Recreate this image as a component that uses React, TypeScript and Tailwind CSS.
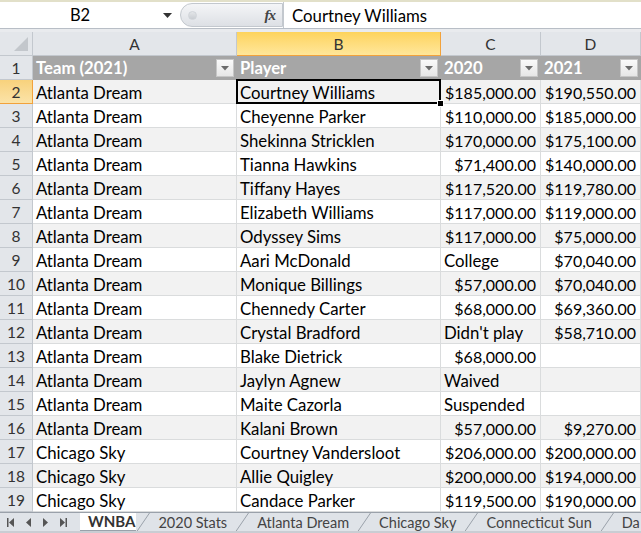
import React from "react";

const ROWS: string[][] = [
  ["Atlanta Dream", "Courtney Williams", "$185,000.00", "$190,550.00"],
  ["Atlanta Dream", "Cheyenne Parker", "$110,000.00", "$185,000.00"],
  ["Atlanta Dream", "Shekinna Stricklen", "$170,000.00", "$175,100.00"],
  ["Atlanta Dream", "Tianna Hawkins", "$71,400.00", "$140,000.00"],
  ["Atlanta Dream", "Tiffany Hayes", "$117,520.00", "$119,780.00"],
  ["Atlanta Dream", "Elizabeth Williams", "$117,000.00", "$119,000.00"],
  ["Atlanta Dream", "Odyssey Sims", "$117,000.00", "$75,000.00"],
  ["Atlanta Dream", "Aari McDonald", "College", "$70,040.00"],
  ["Atlanta Dream", "Monique Billings", "$57,000.00", "$70,040.00"],
  ["Atlanta Dream", "Chennedy Carter", "$68,000.00", "$69,360.00"],
  ["Atlanta Dream", "Crystal Bradford", "Didn't play", "$58,710.00"],
  ["Atlanta Dream", "Blake Dietrick", "$68,000.00", ""],
  ["Atlanta Dream", "Jaylyn Agnew", "Waived", ""],
  ["Atlanta Dream", "Maite Cazorla", "Suspended", ""],
  ["Atlanta Dream", "Kalani Brown", "$57,000.00", "$9,270.00"],
  ["Chicago Sky", "Courtney Vandersloot", "$206,000.00", "$200,000.00"],
  ["Chicago Sky", "Allie Quigley", "$200,000.00", "$194,000.00"],
  ["Chicago Sky", "Candace Parker", "$119,500.00", "$190,000.00"],
];

const WIDTHS = ["w-[204px]", "w-[204px]", "w-[100px]", "w-[100px]"];
const HEADERS = ["Team (2021)", "Player", "2020", "2021"];
const TABS = ["2020 Stats", "Atlanta Dream", "Chicago Sky", "Connecticut Sun", "Da"];

function FilterButton() {
  return (
    <div className="absolute right-[2px] top-[3px] w-[18px] h-[18px] border border-[#c6c6c6] bg-gradient-to-b from-[#fafafa] to-[#e6e6e6] flex items-center justify-center">
      <svg width="8" height="5" viewBox="0 0 8 5">
        <path d="M0 0h8L4 4.5z" fill="#6b6b6b" />
      </svg>
    </div>
  );
}

function Slant() {
  return (
    <svg width="14" height="19" viewBox="0 0 14 19" className="shrink-0">
      <path d="M0.5 19L13.5 0" stroke="#9aa1aa" strokeWidth="1" fill="none" />
    </svg>
  );
}

export default function App() {
  return (
    <div className="w-[641px] h-[533px] overflow-hidden bg-white font-['Lato','Liberation_Sans',sans-serif] text-black select-none">
      {/* formula bar */}
      <div className="h-[2px] bg-[#e2e0c9]" />
      <div className="h-[27px] flex border-b border-[#b8bec6] bg-white">
        <div className="w-[180px] relative flex items-center justify-center pt-[1px] text-[16.5px] pr-[20px]">
          B2
          <svg className="absolute right-[8px] top-[11px]" width="9" height="5" viewBox="0 0 9 5">
            <path d="M0 0h9L4.5 5z" fill="#333" />
          </svg>
        </div>
        <div className="w-[103px] relative flex items-center rounded-l-full border border-[#c3c8ce] bg-gradient-to-b from-[#f4f5f7] to-[#dde0e5] my-[1px]">
          <div className="ml-[7px] w-[9px] h-[9px] rounded-full bg-gradient-to-b from-[#e4e6e9] to-[#c9cdd2] border border-[#d0d4d9]" />
          <span className="ml-auto mr-[7px] font-['Liberation_Serif',serif] italic font-bold text-[15px] text-[#444] tracking-[-1px]">fx</span>
        </div>
        <div className="flex-1 flex items-center pl-[8px] pt-[1px] text-[16.8px] border-l border-[#c3c8ce]">Courtney Williams</div>
      </div>
      <div className="h-[3px] bg-[#e9ebee]" />

      {/* column headers */}
      <div className="flex h-[24px] bg-[#e3e6ea] text-[15.5px] text-[#333]">
        <div className="w-[33px] relative border-r border-b border-[#c3c8ce]">
          <svg className="absolute right-[4px] bottom-[4px]" width="14" height="14" viewBox="0 0 14 14">
            <path d="M14 0V14H0z" fill="#c3c7cc" />
          </svg>
        </div>
        {["A", "B", "C", "D"].map((l, i) =>
          l === "B" ? (
            <div key={l} className={`${WIDTHS[i]} flex items-center justify-center pt-[2px] border-r border-b border-[#f2a23c] bg-gradient-to-b from-[#fdd35b] to-[#ffe79a]`}>
              {l}
            </div>
          ) : (
            <div key={l} className={`${WIDTHS[i]} flex items-center justify-center pt-[2px] border-r border-b border-[#c3c8ce]`}>
              {l}
            </div>
          )
        )}
      </div>

      {/* header row */}
      <div className="flex h-[24px]">
        <div className="w-[33px] flex items-center justify-center pt-[3px] bg-[#e3e6ea] border-r border-b border-[#c3c8ce] text-[15.5px] text-[#333]">1</div>
        {HEADERS.map((h, i) => (
          <div key={h} className={`${WIDTHS[i]} relative flex items-center pl-[3px] pt-[3px] bg-[#a6a6a6] border-r border-b border-[#a6a6a6] text-white font-bold text-[16.7px]`}>
            {h}
            <FilterButton />
          </div>
        ))}
      </div>

      {/* data rows */}
      {ROWS.map((r, ri) => {
        const n = ri + 2;
        const gray = n % 2 === 0;
        const sel = n === 2;
        return (
          <div key={n} className="flex h-[24px]">
            <div
              className={
                sel
                  ? "w-[33px] flex items-center justify-center pt-[3px] bg-gradient-to-b from-[#f8d27c] to-[#fbe3a8] border-r border-b border-[#f2a23c] text-[15.5px] text-[#333]"
                  : "w-[33px] flex items-center justify-center pt-[3px] bg-[#e3e6ea] border-r border-b border-[#c3c8ce] text-[15.5px] text-[#333]"
              }
            >
              {n}
            </div>
            {r.map((c, ci) => {
              const money = c.startsWith("$");
              return (
                <div
                  key={ci}
                  className={`${WIDTHS[ci]} relative flex items-center pt-[3px] whitespace-nowrap border-r border-b ${
                    gray ? "bg-[#f2f2f2] border-[#dadcdd]" : "bg-white border-[#dadcdd]"
                  } ${money ? "justify-end pr-[4px] text-[16px]" : "pl-[3px] text-[16.8px]"}`}
                >
                  {c}
                  {sel && ci === 1 && (
                    <>
                      <div className="absolute left-[-1px] top-[-1px] right-[-1px] bottom-[-1px] border-2 border-black" />
                      <div className="absolute right-[-4px] bottom-[-4px] w-[7px] h-[7px] bg-black border border-white z-10" />
                    </>
                  )}
                </div>
              );
            })}
          </div>
        );
      })}

      {/* sheet tabs */}
      <div className="h-[21px] flex items-start bg-[#dfe3e8] border-t border-[#9aa1aa] relative">
        <div className="w-[80px] shrink-0 h-[18px] flex items-center gap-[12px] pl-[7px]">
          <svg width="7" height="9" viewBox="0 0 7 9"><path d="M0 0h1.5v9H0zM7 0v9L2 4.5z" fill="#555" /></svg>
          <svg width="5" height="9" viewBox="0 0 5 9"><path d="M5 0v9L0 4.5z" fill="#555" /></svg>
          <svg width="5" height="9" viewBox="0 0 5 9"><path d="M0 0v9l5-4.5z" fill="#555" /></svg>
          <svg width="7" height="9" viewBox="0 0 7 9"><path d="M0 0v9l5-4.5zM5.5 0H7v9H5.5z" fill="#555" /></svg>
        </div>
        <div className="h-[18px] shrink-0 flex items-center bg-white pl-[8px] pr-[1px] text-[15px] font-bold text-[#333] border-b border-[#9aa1aa]">
          WNBA
        </div>
        <Slant />
        {TABS.map((t) => (
          <React.Fragment key={t}>
            <div className="h-[19px] shrink-0 flex items-center px-[8px] text-[14.5px] text-[#444] whitespace-nowrap">{t}</div>
            <Slant />
          </React.Fragment>
        ))}
        <div className="absolute left-0 right-0 bottom-0 h-[2px] bg-[#c9cdd3]" />
      </div>
    </div>
  );
}
